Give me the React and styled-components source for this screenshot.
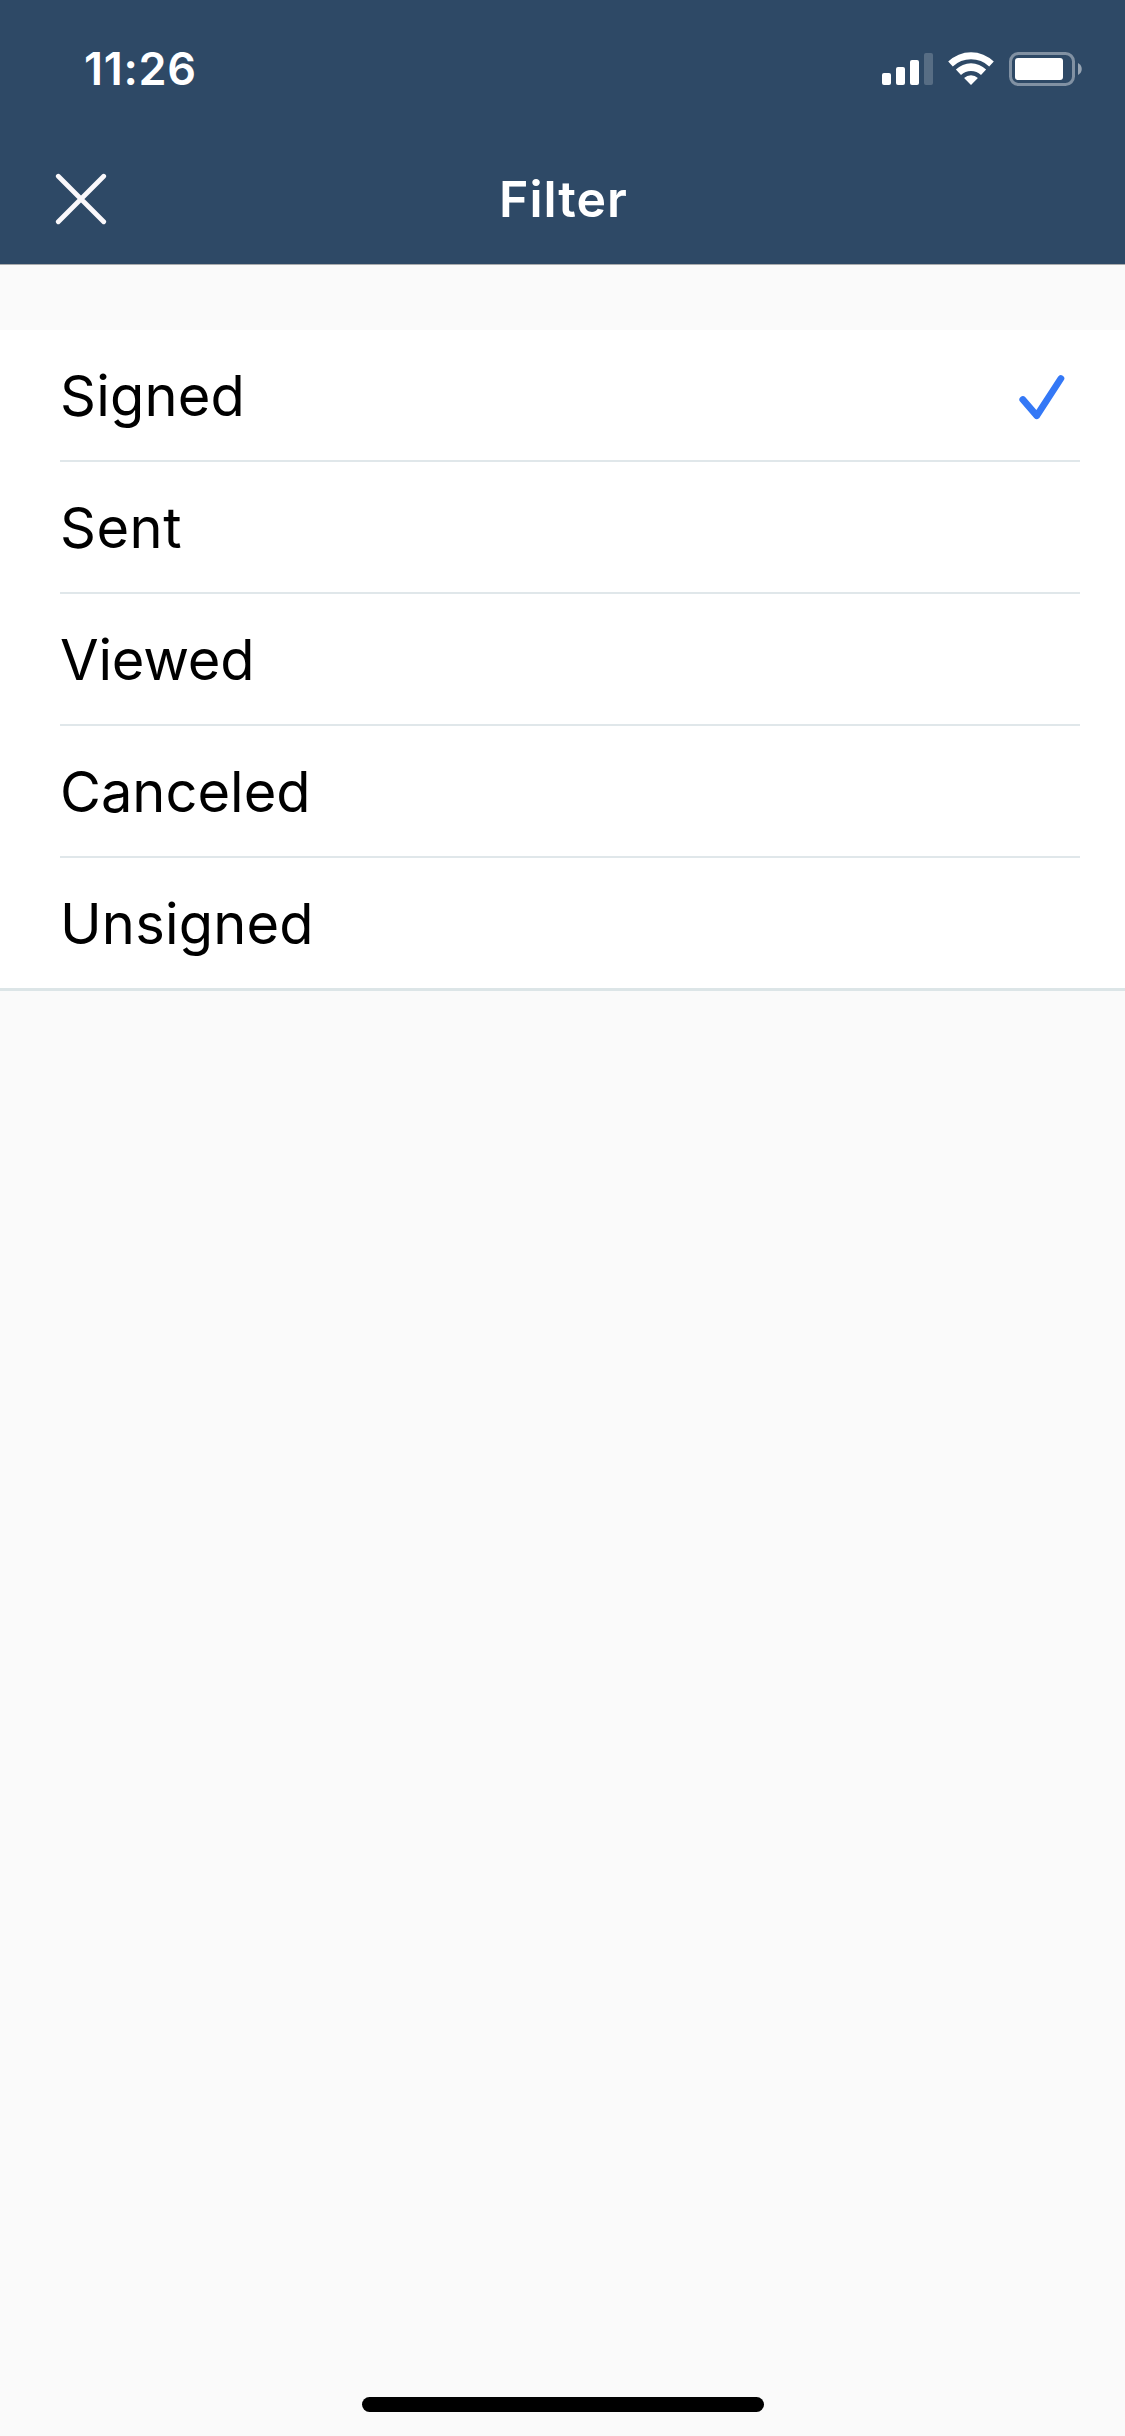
import styled, { createGlobalStyle } from 'styled-components';

const FILTERS = [
  { label: 'Signed', spacing: '0.2px' },
  { label: 'Sent', spacing: '0.5px' },
  { label: 'Viewed', spacing: '-0.2px' },
  { label: 'Canceled', spacing: '0px' },
  { label: 'Unsigned', spacing: '0.2px' },
];

function StatusIcons() {
  return (
    <svg width="200" height="34" viewBox="882 52 200 34" fill="#fff">
      <rect x="882" y="73" width="9" height="12" rx="2" />
      <rect x="896" y="67" width="9" height="18" rx="2" />
      <rect x="910" y="60" width="9" height="25" rx="2" />
      <rect x="924" y="53" width="9" height="32" rx="2" opacity="0.2" />
      <path d="M948.2 61.6A32.6 32.6 0 0 1 993.8 61.6L989.2 66.6A26 26 0 0 0 952.8 66.6Z" />
      <path d="M955.9 69.5A21.6 21.6 0 0 1 986.1 69.5L981 74.9A14.6 14.6 0 0 0 961 74.9Z" />
      <path d="M964.1 77.9A10.2 10.2 0 0 1 977.9 77.9L971 84.9Z" />
      <rect
        x="1010.5"
        y="53.5"
        width="63"
        height="31"
        rx="8"
        fill="none"
        stroke="#fff"
        strokeWidth="3"
        opacity="0.4"
      />
      <rect x="1015" y="58" width="48" height="22" rx="3" />
      <path d="M1078 63C1083 65.5 1083 72.5 1078 75Z" opacity="0.5" />
    </svg>
  );
}

function App() {
  return (
    <Screen>
      <GlobalStyle />
      <Header>
        <StatusBar>
          <Time>11:26</Time>
          <StatusIcons />
        </StatusBar>
        <NavBar>
          <CloseButton aria-label="Close">
            <svg width="52" height="52" viewBox="0 0 52 52" fill="none">
              <path
                d="M3.3 3.3L48.7 48.7M48.7 3.3L3.3 48.7"
                stroke="#faf8fb"
                strokeWidth="4.8"
                strokeLinecap="round"
              />
            </svg>
          </CloseButton>
          <Title>Filter</Title>
        </NavBar>
      </Header>
      <FilterList>
        {FILTERS.map(({ label, spacing }) => (
          <FilterItem key={label}>
            <Label $spacing={spacing}>{label}</Label>
            {label === 'Signed' && (
              <svg width="46" height="46" viewBox="0 0 46 46" fill="none">
                <path
                  d="M3.8 25.5L17.8 41.7L41.9 4.5"
                  stroke="#3478f6"
                  strokeWidth="6.8"
                  strokeLinecap="round"
                  strokeLinejoin="round"
                />
              </svg>
            )}
          </FilterItem>
        ))}
      </FilterList>
      <HomeIndicator />
    </Screen>
  );
}

const GlobalStyle = createGlobalStyle`
  * {
    box-sizing: border-box;
    margin: 0;
    padding: 0;
  }

  body {
    background: #fafafa;
    font-family: Inter, 'Liberation Sans', sans-serif;
  }

  svg {
    display: block;
    flex-shrink: 0;
  }
`;

const Screen = styled.div`
  display: flex;
  flex-direction: column;
  width: 1125px;
  height: 2436px;
  padding-bottom: 24px;
  background: #fafafa;
`;

const Header = styled.header`
  height: 265px;
  border-bottom: 1px solid #a9abad;
  background: #2e4966;
  color: #fff;
`;

const StatusBar = styled.div`
  display: flex;
  justify-content: space-between;
  align-items: center;
  height: 138px;
  padding: 0 43px 0 84px;
`;

const Time = styled.span`
  font-size: 45px;
  font-weight: 600;
  line-height: 54px;
  letter-spacing: 0.7px;
`;

const NavBar = styled.div`
  display: grid;
  grid-template-columns: 160px 1fr 160px;
  align-items: center;
  height: 121px;
`;

const CloseButton = styled.button`
  width: 52px;
  height: 52px;
  margin-left: 55px;
  border: none;
  background: none;
`;

const Title = styled.h1`
  padding-left: 2px;
  font-size: 50px;
  font-weight: 600;
  letter-spacing: 1px;
  text-align: center;
`;

const FilterList = styled.ul`
  margin-top: 65px;
  border-bottom: 3px solid #dce5e7;
  background: #fff;
  list-style: none;
`;

const FilterItem = styled.li`
  display: flex;
  justify-content: space-between;
  align-items: center;
  height: 132px;
  margin: 0 45px 0 60px;
  padding: 3px 15px 0 0;
  border-bottom: 2px solid #e0e7ea;

  &:last-child {
    height: 130px;
    border-bottom: none;
  }
`;

const Label = styled.span`
  padding-bottom: 2px;
  font-size: 56px;
  letter-spacing: ${({ $spacing }) => $spacing};
`;

const HomeIndicator = styled.div`
  width: 402px;
  height: 15px;
  margin: auto auto 0;
  border-radius: 8px;
  background: #000;
`;

export default App;
